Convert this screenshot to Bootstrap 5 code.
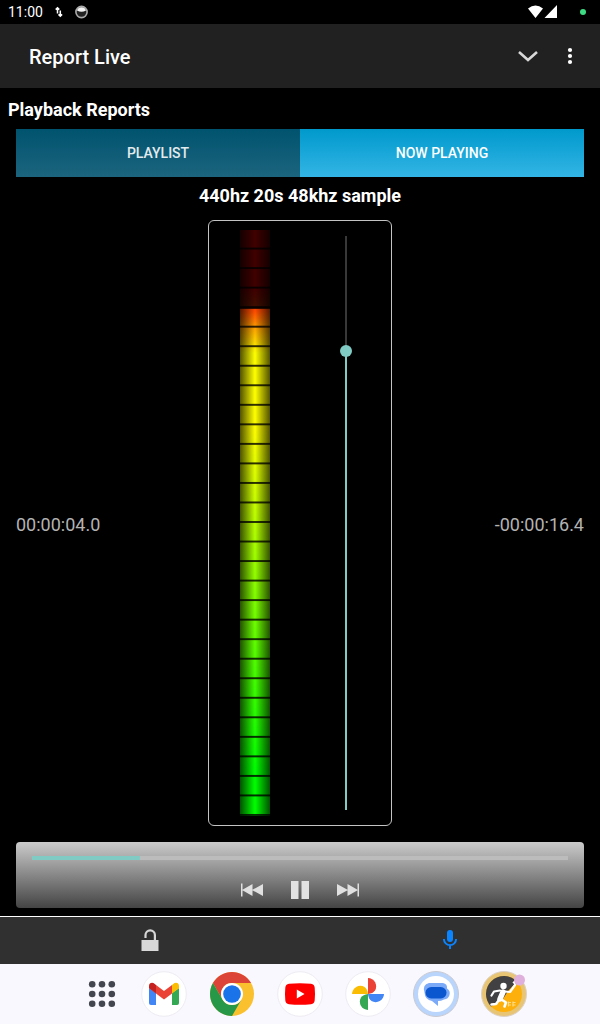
<!DOCTYPE html>
<html lang="en">
<head>
<meta charset="utf-8">
<meta name="viewport" content="width=device-width, initial-scale=1">
<title>Report Live</title>
<link href="https://cdn.jsdelivr.net/npm/bootstrap@5.3.0/dist/css/bootstrap.min.css" rel="stylesheet">
<style>
  body { font-family: Roboto, "Open Sans", sans-serif; background: #000; color: #fff; }
  svg { display: block; }
  .status-bar { height: 24px; font-size: 14px; line-height: 24px; padding: 0 14px 0 8px; }
  .app-bar { height: 64px; background: #212121; padding: 2px 18px 0 29px; }
  .app-title { font-size: 20px; line-height: 24px; font-weight: 500; }
  .icon-btn { padding: 0; border: 0; border-radius: 0; line-height: 1; }
  .collapse-btn { margin-right: 18px; }
  .section-title { font-size: 18px; line-height: 24px; font-weight: 700; margin: 0; }
  .page-heading { padding: 10px 8px 7px; }
  .seg-btn, .seg-btn:hover { height: 48px; border: 0; border-radius: 0; font-size: 14px; font-weight: 500; color: #e3ebee; background: linear-gradient(#00536e, #1c647e); }
  .seg-btn.active { color: #fff; background: linear-gradient(#0099cc, #33b5e5); }
  .track-title { padding: 7px 0 12px; }
  .time-label { font-size: 18px; line-height: 24px; color: #b3b3b3; }
  .level-panel { width: 184px; border: 1px solid #c4c4c4; border-radius: 6px; padding: 9px 0; }
  .vu-meter {
    width: 30px; position: relative;
    background:
      linear-gradient(to bottom, transparent calc(100% - 2px), rgba(0,0,0,.8) calc(100% - 2px)) 0 0 / 100% calc(100% / 30),
      linear-gradient(to right, rgba(0,0,0,.68), transparent 50%, rgba(0,0,0,.68)),
      linear-gradient(#f00 0%, #f00 10%, #ff5000 14%, #ffa800 17%, #ff0 21%, #ff0 34%, #0f0 92%, #0f0 100%);
  }
  .vu-idle { position: absolute; top: 0; left: 0; width: 100%; background: rgba(0,0,0,.75); }
  .volume {
    -webkit-appearance: none; appearance: none; writing-mode: vertical-lr; direction: rtl;
    width: 12px; margin: 0; padding: 0;
    background: linear-gradient(to top, #80cbc4 80%, #383838 80%) center / 2px calc(100% - 12px) no-repeat;
  }
  .volume::-webkit-slider-runnable-track { width: 12px; background: transparent; }
  .volume::-webkit-slider-thumb { -webkit-appearance: none; width: 12px; height: 12px; border-radius: 50%; background: #80cbc4; border: 0; }
  .player { margin: 16px 16px 8px; padding: 14px 16px 6px; border-radius: 4px; background: linear-gradient(#cbcbcb, #444); }
  .seek { height: 4px; border-radius: 0; background: #bcbcbc; }
  .seek .progress-bar { background: #80cbc4; }
  .transport { padding-top: 18px; }
  .transport .btn { width: 48px; height: 24px; }
  .bottom-tabs { border-top: 1px solid #fff; background: #303030; }
  .bottom-tabs .btn { height: 47px; padding-bottom: 2px; }
  .dock { height: 60px; background: #faf8ff; gap: 20px; }
  .dock a { width: 48px; height: 48px; }
</style>
</head>
<body>
<div class="d-flex flex-column min-vh-100">
  <div class="status-bar d-flex align-items-center">
    <span>11:00</span>
    <svg class="ms-2" width="16" height="16" viewBox="0 0 16 16" fill="none" stroke="#fff" stroke-width="1.5" aria-hidden="true"><path d="M6.500 9.500V4M4.700 5.600l1.800-1.800 1.800 1.800M9.300 6.500v5.500M7.500 10.400l1.800 1.800 1.800-1.800"/></svg>
    <svg class="ms-2" width="14" height="14" viewBox="0 0 14 14" aria-hidden="true"><circle cx="6.500" cy="7" r="5.600" fill="#222" stroke="#aaa" stroke-width="1.600"/><path d="M2 5.500a4.700 4.700 0 0 1 9 0Q6.500 8 2 5.500Z" fill="#f4f4f4"/></svg>
    <svg class="ms-auto" width="30" height="14" viewBox="0 0 30 14" fill="#fff" aria-hidden="true"><path d="M0 3.400Q7.500-2.400 15 3.400L7.500 13ZM29 0V13H16.500Z"/></svg>
    <svg width="28" height="14" viewBox="0 0 28 14" aria-hidden="true"><circle cx="25" cy="7" r="3" fill="#3ddc84"/></svg>
  </div>

  <header class="app-bar d-flex align-items-center">
    <h1 class="app-title m-0 me-auto">Report Live</h1>
    <button type="button" class="btn icon-btn collapse-btn" aria-label="Collapse"><svg width="24" height="24" viewBox="0 0 24 24" fill="none" stroke="#d8d8d8" stroke-width="2.600"><path d="m3 7 9 8 9-8"/></svg></button>
    <button type="button" class="btn icon-btn" aria-label="More options"><svg width="24" height="24" viewBox="0 0 24 24" fill="#fff"><circle cx="12" cy="5" r="2.100"/><circle cx="12" cy="11" r="2.100"/><circle cx="12" cy="17" r="2.100"/></svg></button>
  </header>

  <main class="d-flex flex-column flex-grow-1">
    <h2 class="section-title page-heading">Playback Reports</h2>
    <div class="d-flex px-3">
      <button type="button" class="btn seg-btn w-50">PLAYLIST</button>
      <button type="button" class="btn seg-btn active w-50">NOW PLAYING</button>
    </div>
    <h3 class="section-title track-title text-center">440hz 20s 48khz sample</h3>

    <div class="d-flex flex-grow-1 px-3">
      <div class="time-label flex-fill align-self-center w-25 pt-1">00:00:04.0</div>
      <div class="level-panel flex-shrink-0 d-flex">
        <div class="w-50 d-flex justify-content-center">
          <div class="vu-meter" role="meter" aria-label="Level" aria-valuenow="26" aria-valuemin="0" aria-valuemax="30"><div class="vu-idle" style="height:13.4%"></div></div>
        </div>
        <div class="w-50 d-flex justify-content-center">
          <input class="volume" type="range" min="0" max="100" value="80" aria-label="Volume">
        </div>
      </div>
      <div class="time-label flex-fill align-self-center w-25 pt-1 text-end">-00:00:16.4</div>
    </div>

    <section class="player" aria-label="Player">
      <div class="progress seek" role="progressbar" aria-label="Position" aria-valuenow="20" aria-valuemin="0" aria-valuemax="100"><div class="progress-bar" style="width:20.1%"></div></div>
      <div class="transport d-flex justify-content-center">
        <button type="button" class="btn icon-btn d-flex justify-content-center" aria-label="Previous"><svg width="24" height="24" viewBox="0 0 24 24" fill="#e0e0e0"><path d="M1 5.500h1.500v13H1zM12.500 6v12L2 12ZM23 6v12L12 12Z"/></svg></button>
        <button type="button" class="btn icon-btn d-flex justify-content-center" aria-label="Pause"><svg width="24" height="24" viewBox="0 0 24 24" fill="#e2e2e2"><path d="M3 3h7.500v18H3zM13.500 3H21v18h-7.500z"/></svg></button>
        <button type="button" class="btn icon-btn d-flex justify-content-center" aria-label="Next"><svg width="24" height="24" viewBox="0 0 24 24" fill="#e0e0e0"><path d="M21.500 5.500H23v13h-1.500zM11.500 6v12L22 12ZM1 6v12l11-6Z"/></svg></button>
      </div>
    </section>
  </main>

  <nav class="bottom-tabs d-flex" aria-label="Controls">
    <button type="button" class="btn icon-btn w-50 d-flex justify-content-center align-items-center" aria-label="Unlock"><svg width="24" height="26" viewBox="0 0 24 26"><path d="M7.500 11V8a4.700 4.700 0 0 1 9.400 0v6" fill="none" stroke="#d6d6d6" stroke-width="2.200"/><path d="M3.500 13h17v11h-17z" fill="#d8d8d8"/></svg></button>
    <button type="button" class="btn icon-btn w-50 d-flex justify-content-center align-items-center" aria-label="Record"><svg width="24" height="24" viewBox="0 0 24 24"><rect x="9" y="2" width="6" height="12" rx="3" fill="#0a84ff"/><path d="M5.900 11a6.100 6.100 0 0 0 12.200 0M12 17v4" fill="none" stroke="#0a84ff" stroke-width="1.900"/></svg></button>
  </nav>

  <nav class="dock d-flex justify-content-center align-items-center" aria-label="Dock">
    <a href="#" aria-label="All apps"><svg width="48" height="48" viewBox="0 0 48 48" fill="#44464f"><circle cx="20.200" cy="14.200" r="3.300"/><circle cx="30" cy="14.200" r="3.300"/><circle cx="39.800" cy="14.200" r="3.300"/><circle cx="20.200" cy="24" r="3.300"/><circle cx="30" cy="24" r="3.300"/><circle cx="39.800" cy="24" r="3.300"/><circle cx="20.200" cy="33.800" r="3.300"/><circle cx="30" cy="33.800" r="3.300"/><circle cx="39.800" cy="33.800" r="3.300"/></svg></a>
    <a href="#" aria-label="Gmail"><svg width="48" height="48" viewBox="0 0 48 48"><circle cx="24" cy="24" r="22.300" fill="#fff" stroke="#eeecf2"/><path fill="#4285f4" d="M9 18l7 5v12h-5a2 2 0 0 1-2-2z"/><path fill="#34a853" d="M39 18l-7 5v12h5a2 2 0 0 0 2-2z"/><path fill="#ea4335" d="M16 15l8 6 8-6v8.500l-8 6-8-6z"/><path fill="#c5221f" d="M9 16c0-3.200 3.500-4 5.500-2.200L16 15v8.500l-7-5.200z"/><path fill="#fbbc04" d="M39 16c0-3.200-3.500-4-5.500-2.200L32 15v8.500l7-5.200z"/></svg></a>
    <a href="#" aria-label="Chrome"><svg width="48" height="48" viewBox="0 0 48 48"><circle cx="24" cy="24" r="22" fill="#fbc02d"/><path fill="#db4437" d="M4.950 13A22 22 0 0 1 43.050 13H24A11 11 0 0 0 14.470 29.500Z"/><path fill="#279847" d="M4.950 13A22 22 0 0 0 24 46L33.530 29.500A11 11 0 0 1 14.470 29.500Z"/><circle cx="24" cy="24" r="11" fill="#fff"/><circle cx="24" cy="24" r="8.800" fill="#1a73e8"/></svg></a>
    <a href="#" aria-label="YouTube"><svg width="48" height="48" viewBox="0 0 48 48"><circle cx="24" cy="24" r="22.300" fill="#fff" stroke="#eeecf2"/><path fill="#f00" d="M13 13.800q11-1 22 0 3.500.4 3.700 4 .6 6 0 12.400-.2 3.600-3.700 4-11 1-22 0-3.500-.4-3.700-4-.6-6.400 0-12.400.2-3.600 3.700-4Z"/><path d="M20.800 19.500v9L28.500 24z" fill="#fff"/></svg></a>
    <a href="#" aria-label="Photos"><svg width="48" height="48" viewBox="0 0 48 48"><circle cx="24" cy="24" r="22.300" fill="#fff" stroke="#eeecf2"/><path fill="#ea4335" d="M24 8a8.300 8.300 0 0 1 7 12.500Q29 23.500 24 24z"/><path fill="#4285f4" d="M40 24a8.300 8.300 0 0 1-12.500 7Q24.500 29 24 24z"/><path fill="#34a853" d="M24 40a8.300 8.300 0 0 1-7-12.500Q19 24.500 24 24z"/><path fill="#fbbc04" d="M8 24a8.300 8.300 0 0 1 12.500-7Q23.500 19 24 24z"/></svg></a>
    <a href="#" aria-label="Messages"><svg width="48" height="48" viewBox="0 0 48 48"><circle cx="24" cy="24" r="22.500" fill="#b9d5fb" stroke="#c9cad2"/><circle cx="24" cy="24" r="18" fill="#fff"/><path fill="#7baaf8" d="M17 13h14a5 5 0 0 1 4 5.500a6 6 0 0 1-3 11q-3 1.500-6 1.500v5l-6-5q-7-1-7.500-8.500-2.500-8 4.500-9.500Z"/><rect x="13.500" y="17" width="21" height="11.500" rx="5.700" fill="#0b57d0"/></svg></a>
    <a href="#" aria-label="Runner"><svg width="48" height="48" viewBox="0 0 48 48"><circle cx="24" cy="24" r="22.500" fill="#e8c475" stroke="#dcd2c6"/><circle cx="24" cy="24" r="18" fill="#fdb00b"/><path fill="#414143" d="M11 36.500A18 18 0 0 1 37 11.500L28 21l-5 8Z"/><circle cx="23.500" cy="16" r="3.200" fill="#fff"/><g fill="none" stroke="#fff" stroke-linecap="round" stroke-linejoin="round"><path d="M23 22l-3 7" stroke-width="5.500"/><path d="M20 20.500l-6 1-2.500 4M25 21.500l5 .500 5-7" stroke-width="2.200"/><path d="M19 30l-3 4-4.500.500M21.500 29.500l4.500 3-1.500 4" stroke-width="2.600"/></g><path d="M33.500 13.500l2-2" stroke="#fff" stroke-width="3"/><path d="M28.500 32.500h2.500M28.500 35h2.500M28.500 31.500v5M33 32.500h2.500M33 35h2.500M33 31.500v5" stroke="#ffdc85" stroke-width="1.200"/><circle cx="39.500" cy="10" r="5.500" fill="#dfb0dc"/></svg></a>
  </nav>
</div>
<script src="https://cdn.jsdelivr.net/npm/bootstrap@5.3.0/dist/js/bootstrap.bundle.min.js"></script>
</body>
</html>
